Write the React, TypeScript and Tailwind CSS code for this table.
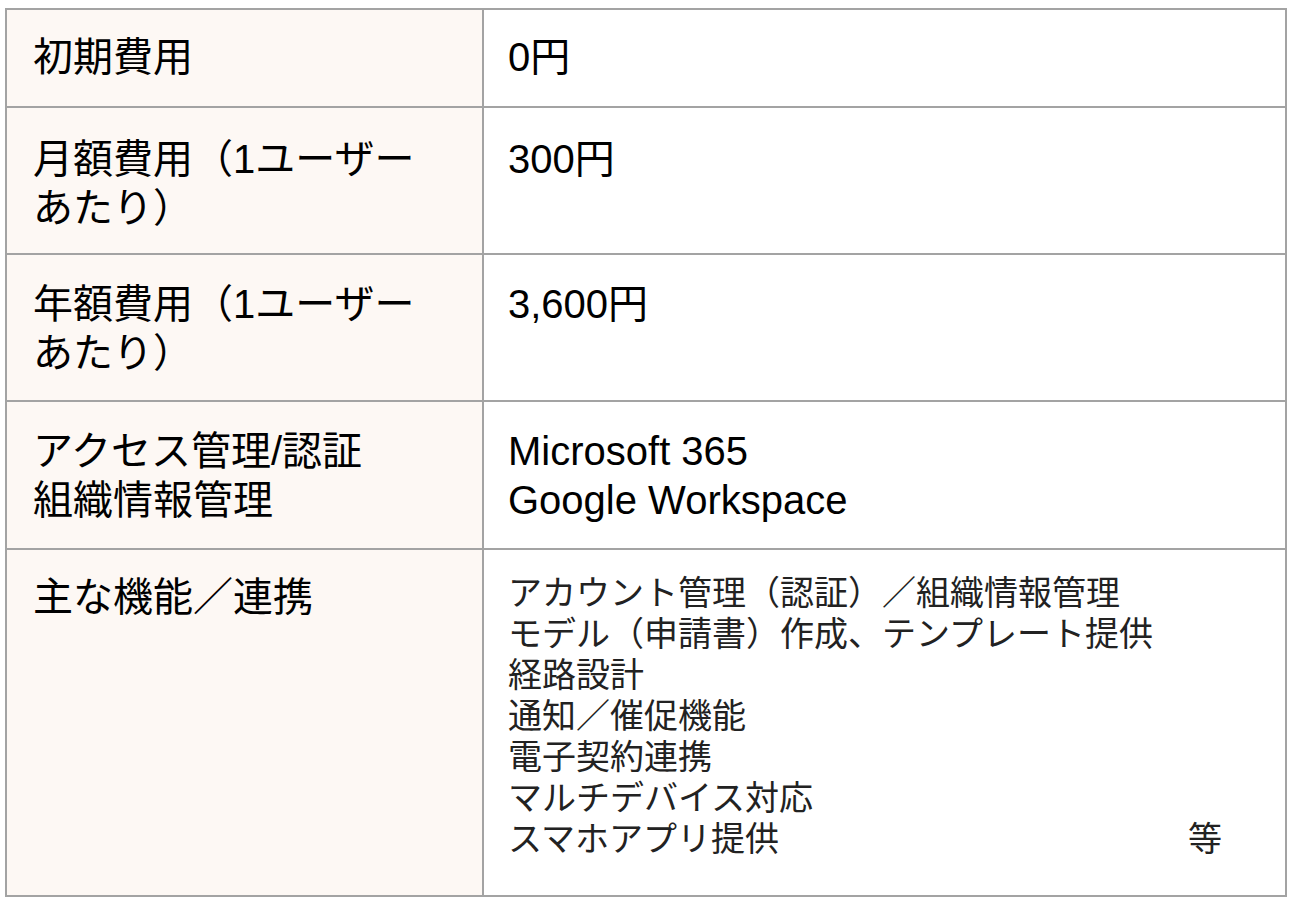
const font = { fontFamily: '"Liberation Sans", "Noto Sans CJK JP", sans-serif' };

type Row = { label: string[]; value: string[]; h: string; pt: string };

const rows: Row[] = [
  { label: ['初期費用'], value: ['0円'], h: 'h-[98px]', pt: 'pt-[23px]' },
  { label: ['月額費用（1ユーザー', 'あたり）'], value: ['300円'], h: 'h-[147px]', pt: 'pt-[27px]' },
  { label: ['年額費用（1ユーザー', 'あたり）'], value: ['3,600円'], h: 'h-[147px]', pt: 'pt-[25px]' },
  { label: ['アクセス管理/認証', '組織情報管理'], value: ['Microsoft 365', 'Google Workspace'], h: 'h-[148px]', pt: 'pt-[25px]' },
];

const features = [
  'アカウント管理（認証）／組織情報管理',
  'モデル（申請書）作成、テンプレート提供',
  '経路設計',
  '通知／催促機能',
  '電子契約連携',
  'マルチデバイス対応',
];

export default function App() {
  return (
    <div className="min-h-[906px] w-[1298px] bg-white pt-[8px] pl-[5px] text-black" style={font}>
      <div className="w-[1282px] border-2 border-[#a3a3a3]">
        {rows.map((r, i) => (
          <div key={i} className={`flex border-b-2 border-[#a3a3a3] ${r.h}`}>
            <div className={`w-[477px] shrink-0 border-r-2 border-[#a3a3a3] bg-[#fdf8f4] pl-[26px] text-[40px] leading-[49px] ${r.pt}`}>
              {r.label.map((l) => (
                <div key={l}>{l}</div>
              ))}
            </div>
            <div className={`flex-1 pl-[24px] text-[40px] leading-[49px] ${r.pt}`}>
              {r.value.map((v) => (
                <div key={v}>{v}</div>
              ))}
            </div>
          </div>
        ))}
        <div className="flex h-[345px]">
          <div className="w-[477px] shrink-0 border-r-2 border-[#a3a3a3] bg-[#fdf8f4] pl-[26px] pt-[23px] text-[40px] leading-[49px]">
            主な機能／連携
          </div>
          <div className="flex-1 pl-[24px] pt-[23px] text-[34px] leading-[41px] text-[#222]">
            {features.map((f) => (
              <div key={f}>{f}</div>
            ))}
            <div className="flex pr-[63px]">
              <span>スマホアプリ提供</span>
              <span className="ml-auto">等</span>
            </div>
          </div>
        </div>
      </div>
    </div>
  );
}
